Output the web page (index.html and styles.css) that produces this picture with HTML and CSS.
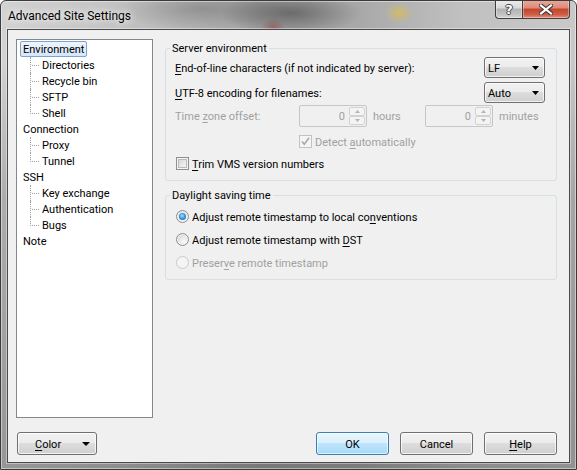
FILE: index.html
```html
<!DOCTYPE html>
<html lang="en">
<head>
<meta charset="utf-8">
<title>Advanced Site Settings</title>
<link rel="stylesheet" href="styles.css">
</head>
<body>
<div class="window">
  <div class="titlebar">
    <span class="title">Advanced Site Settings</span>
    <div class="cbtns">
      <span class="cbtn cb-help">?</span>
      <span class="cbtn cb-close">
        <svg width="14" height="11" viewBox="0 0 14 11"><path d="M2 1.5 L12 9.5 M12 1.5 L2 9.5" stroke="#3a3a3a" stroke-width="4.2" stroke-linecap="square"/><path d="M2 1.5 L12 9.5 M12 1.5 L2 9.5" stroke="#fff" stroke-width="2.2" stroke-linecap="square"/></svg>
      </span>
    </div>
  </div>
  <div class="client">
    <div class="main">
      <ul class="tree">
        <li><span class="lbl sel">Environment</span>
          <ul class="kids">
            <li><span class="lbl">Directories</span></li>
            <li><span class="lbl">Recycle bin</span></li>
            <li><span class="lbl">SFTP</span></li>
            <li><span class="lbl">Shell</span></li>
          </ul>
        </li>
        <li><span class="lbl">Connection</span>
          <ul class="kids">
            <li><span class="lbl">Proxy</span></li>
            <li><span class="lbl">Tunnel</span></li>
          </ul>
        </li>
        <li><span class="lbl">SSH</span>
          <ul class="kids">
            <li><span class="lbl">Key exchange</span></li>
            <li><span class="lbl">Authentication</span></li>
            <li><span class="lbl">Bugs</span></li>
          </ul>
        </li>
        <li><span class="lbl">Note</span></li>
      </ul>
      <div class="panel">
        <fieldset class="group g1">
          <legend>Server environment</legend>
          <div class="row r1">
            <span class="t"><u>E</u>nd-of-line characters (if not indicated by server):</span>
            <span class="combo"><span class="t">LF</span><svg width="7" height="4" viewBox="0 0 7 4"><path d="M0 0 H7 L3.5 4 Z" fill="#000"/></svg></span>
          </div>
          <div class="row r2">
            <span class="t"><u>U</u>TF-8 encoding for filenames:</span>
            <span class="combo"><span class="t">Auto</span><svg width="7" height="4" viewBox="0 0 7 4"><path d="M0 0 H7 L3.5 4 Z" fill="#000"/></svg></span>
          </div>
          <div class="row r3 dis">
            <span class="t tzl">Time <u>z</u>one offset:</span>
            <span class="spin"><span class="val">0</span><span class="arrows"><span class="ab"><svg width="5" height="3" viewBox="0 0 5 3"><path d="M0 3 L2.5 0 L5 3 Z" fill="#b4b4b4"/></svg></span><span class="ab"><svg width="5" height="3" viewBox="0 0 5 3"><path d="M0 0 L5 0 L2.5 3 Z" fill="#b4b4b4"/></svg></span></span></span>
            <span class="t unit u-hours">hours</span>
            <span class="spin"><span class="val">0</span><span class="arrows"><span class="ab"><svg width="5" height="3" viewBox="0 0 5 3"><path d="M0 3 L2.5 0 L5 3 Z" fill="#b4b4b4"/></svg></span><span class="ab"><svg width="5" height="3" viewBox="0 0 5 3"><path d="M0 0 L5 0 L2.5 3 Z" fill="#b4b4b4"/></svg></span></span></span>
            <span class="t unit">minutes</span>
          </div>
          <div class="row r4 dis">
            <span class="cb cb-dis"><svg width="11" height="11" viewBox="0 0 11 11"><path d="M2 5.5 L4.3 8.3 L9 1.8" stroke="#a8a8a8" stroke-width="1.6" fill="none"/></svg></span>
            <span class="t">Detect <u>a</u>utomatically</span>
          </div>
          <div class="row r5">
            <span class="cb"></span>
            <span class="t"><u>T</u>rim VMS version numbers</span>
          </div>
        </fieldset>
        <fieldset class="group g2">
          <legend>Daylight saving time</legend>
          <div class="row rr rr1">
            <span class="rad on"></span>
            <span class="t">Adjust remote timestamp to local co<u>n</u>ventions</span>
          </div>
          <div class="row rr">
            <span class="rad"></span>
            <span class="t">Adjust remote timestamp with <u>D</u>ST</span>
          </div>
          <div class="row rr dis">
            <span class="rad rad-dis"></span>
            <span class="t">Preser<u>v</u>e remote timestamp</span>
          </div>
        </fieldset>
      </div>
    </div>
    <div class="footer">
      <span class="btn btn-color"><span class="t"><u>C</u>olor</span><svg width="8" height="4" viewBox="0 0 8 4"><path d="M0 0 H8 L4 4 Z" fill="#000"/></svg></span>
      <span class="btn btn-ok"><span class="t">OK</span></span>
      <span class="btn"><span class="t">Cancel</span></span>
      <span class="btn"><span class="t"><u>H</u>elp</span></span>
    </div>
  </div>
</div>
</body>
</html>
```

FILE: styles.css
```css
* { box-sizing: border-box; }
html, body { margin: 0; padding: 0; }
body {
  width: 577px;
  height: 470px;
  overflow: hidden;
  font-family: Roboto, "Noto Sans", sans-serif;
  font-size: 11px;
  color: #000;
  background: #fff;
}
u { text-decoration: underline; text-underline-offset: 2px; }
.t { padding-top: 1px; }

.window {
  width: 577px;
  height: 470px;
  display: flex;
  flex-direction: column;
  border: 1px solid #3b3b3b;
  border-radius: 6px 6px 0 0;
  overflow: hidden;
  background:
    radial-gradient(ellipse 70px 22px at 290px 12px, rgba(60,60,60,.55), rgba(60,60,60,0)),
    radial-gradient(ellipse 14px 10px at 398px 12px, rgba(220,190,80,.75), rgba(220,190,80,0)),
    radial-gradient(ellipse 90px 20px at 200px 8px, rgba(90,90,90,.35), rgba(90,90,90,0)),
    radial-gradient(ellipse 12px 10px at 272px 27px, rgba(170,60,60,.5), rgba(170,60,60,0)),
    linear-gradient(to bottom, rgba(0,0,0,0) 0, rgba(0,0,0,0) 60px, rgba(60,60,60,.25) 200px, rgba(40,40,40,.35) 470px),
    linear-gradient(to right, #d2d2d2 0%, #c2c2c2 22%, #a2a2a2 45%, #a8a8a8 62%, #c0c0c0 80%, #c9c9c9 100%);
  box-shadow: inset 0 0 0 1px rgba(255,255,255,.45);
}

.titlebar {
  height: 28px;
  display: flex;
  align-items: flex-start;
  flex-shrink: 0;
}
.title {
  padding: 7px 0 0 7px;
  line-height: 16px;
  font-size: 12px;
  color: #000;
  text-shadow: 0 0 6px rgba(255,255,255,.9), 0 0 10px rgba(255,255,255,.7);
}
.cbtns {
  display: flex;
  margin-left: auto;
  margin-top: -1px;
  margin-right: 6px;
  height: 19px;
}
.cbtn {
  height: 19px;
  border: 1px solid #3e3e3e;
  border-top: none;
  display: flex;
  align-items: center;
  justify-content: center;
  box-shadow: inset 0 0 0 1px rgba(255,255,255,.35);
}
.cb-help {
  width: 27px;
  border-right: none;
  border-radius: 0 0 0 4px;
  background: linear-gradient(#eeeeee 0%, #d8d8d8 45%, #b2b2b2 50%, #c6c6c6 85%, #d6d6d6 100%);
  font-family: "DejaVu Sans", sans-serif;
  font-weight: bold;
  font-size: 13px;
  color: #fff;
  text-shadow: -1px 0 #444, 1px 0 #444, 0 -1px #444, 0 1px #444;
  padding-top: 1px;
}
.cb-close {
  width: 48px;
  border-radius: 0 0 4px 0;
  background: linear-gradient(#e9aa9b 0%, #dc8a77 45%, #c5432a 50%, #cf5c45 80%, #e0917e 100%);
}

.client {
  flex: 1;
  margin: 0 6px 6px 6px;
  border: 1px solid #4a4a4a;
  box-shadow: 0 0 0 1px rgba(255,255,255,.4);
  background: #f0f0f0;
  padding: 9px 12px 7px 8px;
  display: flex;
  flex-direction: column;
}
.main {
  display: flex;
  height: 379px;
  gap: 12px;
}

/* tree */
.tree {
  width: 137px;
  height: 379px;
  border: 1px solid #828790;
  background: #fff;
  margin: 0;
  padding: 1px 0 0 0;
  list-style: none;
}
.tree ul { list-style: none; margin: 0; padding: 0; }
.tree li { margin: 0; padding: 0; }
.lbl {
  display: block;
  width: max-content;
  height: 16px;
  line-height: 13px;
  padding: 1px 2px 0 2px;
  border: 1px solid transparent;
  border-radius: 2px;
  margin-left: 3px;
}
.sel {
  border-color: #7da2ce;
  background: linear-gradient(#eef5fd, #d3e6fc);
}
.kids > li { position: relative; }
.kids .lbl { margin-left: 22px; }
.kids > li::before {
  content: "";
  position: absolute;
  left: 13px;
  top: 0;
  height: 16px;
  border-left: 1px dotted #a0a0a0;
}
.kids > li:last-child::before { height: 9px; }
.kids > li::after {
  content: "";
  position: absolute;
  left: 15px;
  top: 8px;
  width: 7px;
  border-top: 1px dotted #a0a0a0;
}

/* panel */
.panel {
  width: 392px;
  padding-top: 2px;
  display: flex;
  flex-direction: column;
  gap: 7px;
}
.group {
  margin: 0;
  min-width: 0;
  border: 1px solid #d5dfe5;
  border-radius: 3px;
  padding: 0 11px 8px 9px;
}
.group legend {
  padding: 1px 2px 0 2px;
  margin-left: -5px;
  line-height: 14px;
}
.row {
  display: flex;
  align-items: center;
  white-space: nowrap;
}
.r1 { height: 21px; margin-top: 1px; justify-content: space-between; }
.r2 { height: 21px; margin-top: 4px; justify-content: space-between; }
.r3 { height: 22px; margin-top: 2px; }
.r4 { height: 17px; margin-top: 6px; padding-left: 124px; gap: 3px; }
.r5 { height: 17px; margin-top: 5px; padding-left: 1px; gap: 3px; }
.dis { color: #a0a0a0; }

.combo {
  width: 61px;
  height: 21px;
  border: 1px solid #707070;
  border-radius: 3px;
  background: linear-gradient(#f2f2f2 0%, #ebebeb 50%, #dddddd 50%, #cfcfcf 100%);
  box-shadow: inset 0 0 0 1px rgba(255,255,255,.7);
  display: flex;
  align-items: center;
  justify-content: space-between;
  padding: 0 5px 0 3px;
  color: #000;
}

.tzl { width: 124px; }
.spin {
  width: 68px;
  height: 22px;
  border: 1px solid #c6c6c6;
  border-radius: 2px;
  display: flex;
  padding: 1px;
}
.spin .val {
  flex: 1;
  text-align: right;
  padding: 1px 4px 0 0;
  line-height: 18px;
  color: #a0a0a0;
}
.arrows {
  width: 16px;
  display: flex;
  flex-direction: column;
}
.ab {
  flex: 1;
  border: 1px solid #d2d2d2;
  border-radius: 2px;
  background: #f4f4f4;
  display: flex;
  align-items: center;
  justify-content: center;
}
.unit { width: 52px; padding-left: 6px; }
.u-hours { width: 58px; }

.cb {
  width: 13px;
  height: 13px;
  border: 1px solid #8e8f8f;
  background: linear-gradient(135deg, #cdcdcd 0%, #ececec 60%, #f8f8f8 100%);
  box-shadow: inset 0 0 0 1px #f4f4f4, inset 0 0 0 2px #b8bcc0;
  display: flex;
  align-items: center;
  justify-content: center;
  flex-shrink: 0;
}
.cb-dis {
  border-color: #c2c2c2;
  background: #f4f4f4;
  box-shadow: none;
}

.rr { height: 17px; margin-top: 6px; padding-left: 1px; gap: 3px; }
.rr1 { margin-top: 5px; }
.rad {
  width: 13px;
  height: 13px;
  border-radius: 50%;
  border: 1px solid #8e8f8f;
  background: radial-gradient(circle at 65% 70%, #fafafa 0%, #e4e4e4 50%, #c9c9c9 100%);
  box-shadow: inset 0 0 0 1px #f2f2f2;
  flex-shrink: 0;
  display: flex;
  align-items: center;
  justify-content: center;
}
.rad.on::after {
  content: "";
  width: 7px;
  height: 7px;
  border-radius: 50%;
  background: radial-gradient(circle at 45% 40%, #a6e4ff 0%, #3d9ae0 45%, #14589e 100%);
}
.rad-dis {
  border-color: #cacaca;
  background: #f4f4f4;
  box-shadow: none;
}

/* footer */
.footer {
  display: flex;
  height: 23px;
  margin-top: 14px;
  gap: 11px;
}
.btn {
  width: 73px;
  height: 23px;
  border: 1px solid #707070;
  border-radius: 3px;
  background: linear-gradient(#f2f2f2 0%, #ebebeb 50%, #dddddd 50%, #cfcfcf 100%);
  box-shadow: inset 0 0 0 1px rgba(255,255,255,.75);
  display: flex;
  align-items: center;
  justify-content: center;
}
.btn-color {
  width: 80px;
  margin-left: 1px;
  justify-content: space-between;
  padding: 0 6px 0 17px;
}
.btn-ok {
  margin-left: auto;
  border-color: #3c7fb1;
  background: linear-gradient(#eaf6fd 0%, #d9f0fc 50%, #bee6fd 50%, #a7d9f5 100%);
  box-shadow: inset 0 0 0 1px rgba(255,255,255,.6);
}
```
